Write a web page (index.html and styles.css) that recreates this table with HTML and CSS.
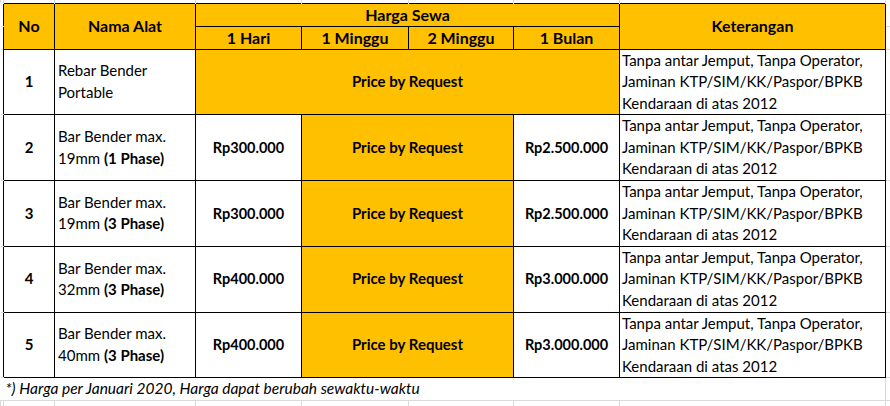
FILE: index.html
```html
<!DOCTYPE html>
<html lang="id">
<head>
<meta charset="utf-8">
<title>Harga Sewa Bar Bender</title>
<link rel="stylesheet" href="styles.css">
</head>
<body>
<table class="sheet">
  <colgroup>
    <col class="c-gl">
    <col class="c-no">
    <col class="c-nama">
    <col class="c-p1">
    <col class="c-p2">
    <col class="c-p3">
    <col class="c-p4">
    <col class="c-ket">
    <col class="c-gr">
  </colgroup>
  <tr class="r-top">
    <td class="g g-top"></td><td class="g g-top"></td><td class="g g-top"></td><td class="g g-top"></td><td class="g g-top"></td><td class="g g-top"></td><td class="g g-top"></td><td class="g g-top"></td><td class="g g-top"></td>
  </tr>
  <tr class="r-h">
    <td class="g g-left"></td>
    <th class="hd" rowspan="2">No</th>
    <th class="hd" rowspan="2">Nama Alat</th>
    <th class="hd" colspan="4">Harga Sewa</th>
    <th class="hd" rowspan="2">Keterangan</th>
    <td class="g g-right"></td>
  </tr>
  <tr class="r-h">
    <td class="g g-left"></td>
    <th class="hd">1 Hari</th>
    <th class="hd">1 Minggu</th>
    <th class="hd">2 Minggu</th>
    <th class="hd">1 Bulan</th>
    <td class="g g-right"></td>
  </tr>
  <tr class="r-b">
    <td class="g g-left"></td>
    <td class="cell num">1</td>
    <td class="cell name">Rebar Bender<br>Portable</td>
    <td class="cell req" colspan="4">Price by Request</td>
    <td class="cell ket">Tanpa antar Jemput, Tanpa Operator,<br>Jaminan KTP/SIM/KK/Paspor/BPKB<br>Kendaraan di atas 2012</td>
    <td class="g g-right"></td>
  </tr>
  <tr class="r-b">
    <td class="g g-left"></td>
    <td class="cell num">2</td>
    <td class="cell name">Bar Bender max.<br>19mm <b>(1 Phase)</b></td>
    <td class="cell price">Rp300.000</td>
    <td class="cell req" colspan="2">Price by Request</td>
    <td class="cell price">Rp2.500.000</td>
    <td class="cell ket">Tanpa antar Jemput, Tanpa Operator,<br>Jaminan KTP/SIM/KK/Paspor/BPKB<br>Kendaraan di atas 2012</td>
    <td class="g g-right"></td>
  </tr>
  <tr class="r-b">
    <td class="g g-left"></td>
    <td class="cell num">3</td>
    <td class="cell name">Bar Bender max.<br>19mm <b>(3 Phase)</b></td>
    <td class="cell price">Rp300.000</td>
    <td class="cell req" colspan="2">Price by Request</td>
    <td class="cell price">Rp2.500.000</td>
    <td class="cell ket">Tanpa antar Jemput, Tanpa Operator,<br>Jaminan KTP/SIM/KK/Paspor/BPKB<br>Kendaraan di atas 2012</td>
    <td class="g g-right"></td>
  </tr>
  <tr class="r-b">
    <td class="g g-left"></td>
    <td class="cell num">4</td>
    <td class="cell name">Bar Bender max.<br>32mm <b>(3 Phase)</b></td>
    <td class="cell price">Rp400.000</td>
    <td class="cell req" colspan="2">Price by Request</td>
    <td class="cell price">Rp3.000.000</td>
    <td class="cell ket">Tanpa antar Jemput, Tanpa Operator,<br>Jaminan KTP/SIM/KK/Paspor/BPKB<br>Kendaraan di atas 2012</td>
    <td class="g g-right"></td>
  </tr>
  <tr class="r-b">
    <td class="g g-left"></td>
    <td class="cell num">5</td>
    <td class="cell name">Bar Bender max.<br>40mm <b>(3 Phase)</b></td>
    <td class="cell price">Rp400.000</td>
    <td class="cell req" colspan="2">Price by Request</td>
    <td class="cell price">Rp3.000.000</td>
    <td class="cell ket">Tanpa antar Jemput, Tanpa Operator,<br>Jaminan KTP/SIM/KK/Paspor/BPKB<br>Kendaraan di atas 2012</td>
    <td class="g g-right"></td>
  </tr>
  <tr class="r-note">
    <td class="note" colspan="8">*) Harga per Januari 2020, Harga dapat berubah sewaktu-waktu</td>
    <td class="g g-note"></td>
  </tr>
  <tr class="r-bottom">
    <td class="g g-bot"></td><td class="g g-bot"></td><td class="g g-bot"></td><td class="g g-bot"></td><td class="g g-bot"></td><td class="g g-bot"></td><td class="g g-bot"></td><td class="g g-bot"></td><td class="g g-bot"></td>
  </tr>
</table>
</body>
</html>
```
FILE: styles.css
```css
html, body {
  margin: 0;
  padding: 0;
  background: #ffffff;
  overflow: hidden;
}

body {
  font-family: "Lato", "Liberation Sans", sans-serif;
  font-size: 15px;
  color: #000000;
}

.sheet {
  border-collapse: collapse;
  table-layout: fixed;
  width: 890px;
}

.c-gl { width: 3px; }
.c-no { width: 51px; }
.c-nama { width: 141px; }
.c-p1 { width: 106px; }
.c-p2 { width: 107px; }
.c-p3 { width: 105px; }
.c-p4 { width: 106px; }
.c-ket { width: 266px; }
.c-gr { width: 5px; }

.r-top { height: 3px; }
.r-h { height: 23px; }
.r-b { height: 65px; }
.r-note { height: 21px; }
.r-bottom { height: 20px; }

td, th {
  padding: 0;
  line-height: 21.6px;
  white-space: nowrap;
  overflow: hidden;
}

.g {
  border: none;
}

.g-top {
  border-left: 1px solid #dadada;
  border-right: 1px solid #dadada;
}

.g-left {
  border-bottom: 1px solid #dadada;
}

.g-right {
  border-bottom: 1px solid #dadada;
}

.g-note {
  border-left: 1px solid #dadada;
  border-bottom: 1px solid #dadada;
}

.g-bot {
  border-left: 1px solid #dadada;
  border-right: 1px solid #dadada;
}

.hd {
  background: #ffc000;
  border: 1px solid #000000;
  font-size: 16px;
  font-weight: bold;
  text-align: center;
  vertical-align: middle;
  line-height: 20px;
}

.cell {
  border: 1px solid #000000;
  vertical-align: middle;
  background: #ffffff;
}

.num {
  text-align: center;
  font-weight: bold;
}

.name {
  text-align: left;
  padding-left: 3px;
}

.price {
  text-align: center;
  font-weight: bold;
  font-size: 14.5px;
}

.req {
  background: #ffc000;
  text-align: center;
  font-weight: bold;
}

.ket {
  text-align: left;
  padding-left: 2px;
}

.note {
  font-style: italic;
  font-size: 15.5px;
  padding-left: 5px;
  border-bottom: 1px solid #dadada;
  vertical-align: middle;
}
```
